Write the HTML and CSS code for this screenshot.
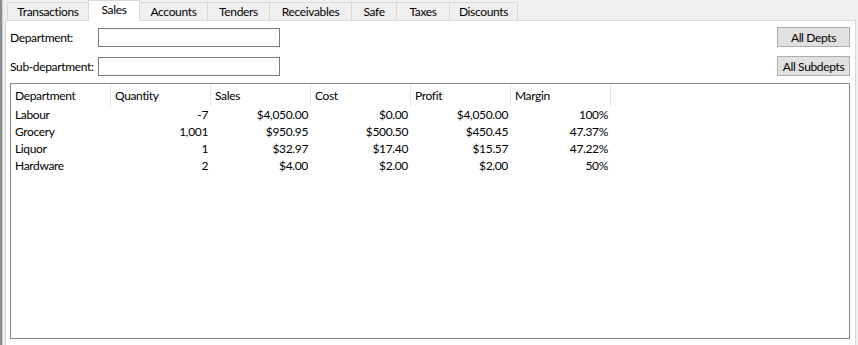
FILE: index.html
```html
<!DOCTYPE html>
<html>
<head>
<meta charset="utf-8">
<link rel="stylesheet" href="styles.css">
</head>
<body>
<div class="window">
  <div class="edge"></div>
  <div class="tabctl">
    <div class="tabs">
      <div class="tab w82">Transactions</div>
      <div class="tab selected">Sales</div>
      <div class="tab w69">Accounts</div>
      <div class="tab w63">Tenders</div>
      <div class="tab w83">Receivables</div>
      <div class="tab w46">Safe</div>
      <div class="tab w54">Taxes</div>
      <div class="tab w69">Discounts</div>
    </div>
    <div class="panel">
      <div class="formrow">
        <label class="lbl">Department:</label>
        <input class="field" type="text">
        <button class="btn">All Depts</button>
      </div>
      <div class="formrow second">
        <label class="lbl">Sub-department:</label>
        <input class="field" type="text">
        <button class="btn">All Subdepts</button>
      </div>
      <div class="listview">
        <div class="grid header">
          <div class="hcell">Department</div>
          <div class="hcell">Quantity</div>
          <div class="hcell">Sales</div>
          <div class="hcell">Cost</div>
          <div class="hcell">Profit</div>
          <div class="hcell">Margin</div>
        </div>
        <div class="grid row">
          <div class="cell">Labour</div>
          <div class="cell num">-7</div>
          <div class="cell num">$4,050.00</div>
          <div class="cell num">$0.00</div>
          <div class="cell num">$4,050.00</div>
          <div class="cell num">100%</div>
        </div>
        <div class="grid row">
          <div class="cell">Grocery</div>
          <div class="cell num">1,001</div>
          <div class="cell num">$950.95</div>
          <div class="cell num">$500.50</div>
          <div class="cell num">$450.45</div>
          <div class="cell num">47.37%</div>
        </div>
        <div class="grid row">
          <div class="cell">Liquor</div>
          <div class="cell num">1</div>
          <div class="cell num">$32.97</div>
          <div class="cell num">$17.40</div>
          <div class="cell num">$15.57</div>
          <div class="cell num">47.22%</div>
        </div>
        <div class="grid row">
          <div class="cell">Hardware</div>
          <div class="cell num">2</div>
          <div class="cell num">$4.00</div>
          <div class="cell num">$2.00</div>
          <div class="cell num">$2.00</div>
          <div class="cell num">50%</div>
        </div>
      </div>
    </div>
  </div>
</div>
</body>
</html>
```

FILE: styles.css
```css
* { box-sizing: border-box; }
html, body {
  margin: 0;
  padding: 0;
  background: #f0f0f0;
  font-family: "Lato", "Noto Sans", sans-serif;
  font-size: 12px;
  letter-spacing: -0.35px;
  color: #000;
}
.window {
  display: flex;
  align-items: flex-start;
  width: 858px;
  height: 345px;
  overflow: hidden;
}
.edge {
  width: 5px;
  height: 352px;
  flex: none;
  background: linear-gradient(to right, #8a8a8a 0, #8a8a8a 2px, #d4d4d4 2px, #d4d4d4 3px, #ececec 3px);
}
.tabctl {
  width: 851px;
  height: 352px;
  flex: none;
  display: flex;
  flex-direction: column;
}
.tabs {
  display: flex;
  align-items: flex-end;
  height: 20px;
  flex: none;
  padding-left: 2px;
  position: relative;
  z-index: 1;
}
.tab {
  height: 18px;
  border: 1px solid #d9d9d9;
  border-bottom: none;
  background: #f0f0f0;
  margin-left: -1px;
  display: flex;
  align-items: center;
  justify-content: center;
  padding-bottom: 1px;
  white-space: nowrap;
}
.tab:first-child { margin-left: 0; }
.tab.selected {
  width: 52px;
  height: 21px;
  margin-bottom: -1px;
  background: #fff;
  position: relative;
  z-index: 2;
  padding-bottom: 3px;
}
.w82 { width: 82px; }
.w69 { width: 69px; }
.w63 { width: 63px; }
.w83 { width: 83px; }
.w46 { width: 46px; }
.w54 { width: 54px; }
.panel {
  flex: 1;
  background: #fff;
  border: 1px solid #d9d9d9;
  padding: 6px 5px 12px 4px;
  display: flex;
  flex-direction: column;
}
.formrow {
  display: flex;
  align-items: center;
  height: 20px;
  flex: none;
}
.formrow.second {
  margin-top: 9px;
}
.lbl {
  width: 88px;
  flex: none;
  white-space: nowrap;
}
.field {
  width: 182px;
  height: 19px;
  border: 1px solid #7a7a7a;
  background: #fff;
  margin: 0;
  padding: 0 2px;
  font: inherit;
}
.btn {
  margin-left: auto;
  width: 73px;
  height: 20px;
  border: 1px solid #adadad;
  background: #e1e1e1;
  font: inherit;
  letter-spacing: inherit;
  color: #000;
  padding: 0;
}
.listview {
  margin-top: 7px;
  flex: 1;
  border: 1px solid #828790;
  background: #fff;
}
.grid {
  display: grid;
  grid-template-columns: repeat(6, 100px);
}
.header {
  height: 22px;
}
.hcell {
  border-right: 1px solid #e5e5e5;
  padding-left: 4px;
  display: flex;
  align-items: center;
  padding-top: 1px;
}
.row {
  height: 17px;
}
.cell {
  padding: 0 3px 0 4px;
  display: flex;
  align-items: center;
  white-space: nowrap;
}
.cell.num {
  justify-content: flex-end;
}
```
